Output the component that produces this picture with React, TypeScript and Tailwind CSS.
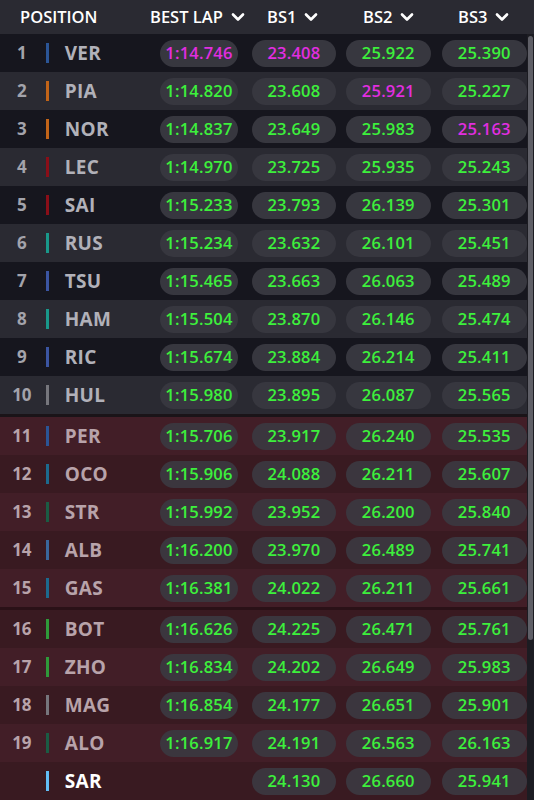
import { ChevronDown } from "lucide-react";

type Row = {
  pos?: number;
  code: string;
  team: string;
  lap?: string;
  s1: string;
  s2: string;
  s3: string;
  best?: ("lap" | "s1" | "s2" | "s3")[];
};

const rows: Row[] = [
  { pos: 1, code: "VER", team: "#2b5596", lap: "1:14.746", s1: "23.408", s2: "25.922", s3: "25.390", best: ["lap", "s1"] },
  { pos: 2, code: "PIA", team: "#c26418", lap: "1:14.820", s1: "23.608", s2: "25.921", s3: "25.227", best: ["s2"] },
  { pos: 3, code: "NOR", team: "#c26418", lap: "1:14.837", s1: "23.649", s2: "25.983", s3: "25.163", best: ["s3"] },
  { pos: 4, code: "LEC", team: "#8a0e18", lap: "1:14.970", s1: "23.725", s2: "25.935", s3: "25.243" },
  { pos: 5, code: "SAI", team: "#8a0e18", lap: "1:15.233", s1: "23.793", s2: "26.139", s3: "25.301" },
  { pos: 6, code: "RUS", team: "#19988a", lap: "1:15.234", s1: "23.632", s2: "26.101", s3: "25.451" },
  { pos: 7, code: "TSU", team: "#3b55a2", lap: "1:15.465", s1: "23.663", s2: "26.063", s3: "25.489" },
  { pos: 8, code: "HAM", team: "#19988a", lap: "1:15.504", s1: "23.870", s2: "26.146", s3: "25.474" },
  { pos: 9, code: "RIC", team: "#3b55a2", lap: "1:15.674", s1: "23.884", s2: "26.214", s3: "25.411" },
  { pos: 10, code: "HUL", team: "#76767c", lap: "1:15.980", s1: "23.895", s2: "26.087", s3: "25.565" },
  { pos: 11, code: "PER", team: "#2b5596", lap: "1:15.706", s1: "23.917", s2: "26.240", s3: "25.535" },
  { pos: 12, code: "OCO", team: "#1c6a8e", lap: "1:15.906", s1: "24.088", s2: "26.211", s3: "25.607" },
  { pos: 13, code: "STR", team: "#1b5c44", lap: "1:15.992", s1: "23.952", s2: "26.200", s3: "25.840" },
  { pos: 14, code: "ALB", team: "#3a679c", lap: "1:16.200", s1: "23.970", s2: "26.489", s3: "25.741" },
  { pos: 15, code: "GAS", team: "#1c6a8e", lap: "1:16.381", s1: "24.022", s2: "26.211", s3: "25.661" },
  { pos: 16, code: "BOT", team: "#2f9a3a", lap: "1:16.626", s1: "24.225", s2: "26.471", s3: "25.761" },
  { pos: 17, code: "ZHO", team: "#2f9a3a", lap: "1:16.834", s1: "24.202", s2: "26.649", s3: "25.983" },
  { pos: 18, code: "MAG", team: "#76767c", lap: "1:16.854", s1: "24.177", s2: "26.651", s3: "25.901" },
  { pos: 19, code: "ALO", team: "#1b5c44", lap: "1:16.917", s1: "24.191", s2: "26.563", s3: "26.163" },
  { code: "SAR", team: "#62bdf5", s1: "24.130", s2: "26.660", s3: "25.941" },
];

const Pill = ({ value, purple, w, red }: { value?: string; purple?: boolean; w: string; red: boolean }) => {
  if (!value) return <div className={w} />;
  return (
    <div
      className={`${w} h-[27px] rounded-full flex items-center justify-center text-[16.5px] font-semibold tracking-[0.2px] ${
        red ? "bg-[#3b363e]" : "bg-[#37373f]"
      } ${purple ? "text-[#e12ee0]" : "text-[#3df03c]"}`}
    >
      {value}
    </div>
  );
};

const TimingRow = ({ row, index }: { row: Row; index: number }) => {
  const red = index >= 10;
  const light = index % 2 === (red ? 0 : 1);
  const bg = red
    ? light
      ? "bg-[#421e27]"
      : "bg-[#391a21]"
    : light
    ? "bg-[#2a2a32]"
    : "bg-[#16161e]";
  const best = row.best ?? [];
  const isSar = !row.pos;
  return (
    <div className={`flex items-center h-[38px] ${bg}`}>
      <div
        className={`w-[44px] text-center text-[17px] font-bold ${
          red ? "text-[#b8a3aa]" : "text-[#a3a3ab]"
        }`}
      >
        {row.pos}
      </div>
      <div className="w-[3px] h-[20px] ml-[2px]" style={{ backgroundColor: row.team }} />
      <div
        className={`ml-[16px] w-[96px] text-[19px] font-bold tracking-[0.3px] ${
          isSar ? "text-white" : red ? "text-[#b8a3aa]" : "text-[#b1b1b9]"
        }`}
      >
        {row.code}
      </div>
      <Pill value={row.lap} purple={best.includes("lap")} w="w-[78px]" red={red} />
      <div className="w-[14px]" />
      <Pill value={row.s1} purple={best.includes("s1")} w="w-[85px]" red={red} />
      <div className="w-[10px]" />
      <Pill value={row.s2} purple={best.includes("s2")} w="w-[85px]" red={red} />
      <div className="w-[11px]" />
      <Pill value={row.s3} purple={best.includes("s3")} w="w-[86px]" red={red} />
    </div>
  );
};

const HeaderCell = ({ label, className }: { label: string; className: string }) => (
  <div className={`flex items-center gap-[5px] ${className}`}>
    <span>{label}</span>
    <ChevronDown size={20} strokeWidth={3.2} className="text-white" />
  </div>
);

export default function App() {
  return (
    <div
      className="w-[534px] h-[800px] overflow-hidden bg-[#16161e] text-white"
      style={{ fontFamily: "'Open Sans', 'Liberation Sans', sans-serif" }}
    >
      <div className="h-[34px] bg-[#2a2a32] flex items-center text-[16.5px] font-semibold">
        <div className="w-[150px] pl-[20px]">POSITION</div>
        <HeaderCell label="BEST LAP" className="w-[117px]" />
        <HeaderCell label="BS1" className="w-[96px]" />
        <HeaderCell label="BS2" className="w-[95px]" />
        <HeaderCell label="BS3" className="flex-1" />
      </div>
      <div className="relative flex">
        <div className="flex-1 overflow-hidden">
          {rows.map((row, i) => (
            <div key={row.code}>
              {(i === 10 || i === 15) && (
                <div className={`h-[3px] ${i === 10 ? "bg-[#1a1418]" : "bg-[#2a1117]"}`} />
              )}
              <TimingRow row={row} index={i} />
            </div>
          ))}
        </div>
        <div className="w-[7px] bg-[#1c1c22]" />
        <div className="absolute right-[1px] top-[2px] w-[5px] h-[604px] rounded-full bg-[#5f5f67]" />
      </div>
    </div>
  );
}
